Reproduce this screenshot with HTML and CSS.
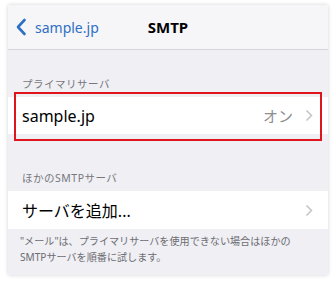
FILE: index.html
```html
<!DOCTYPE html>
<html>
<head>
  <title>SMTP</title>
  <link rel="stylesheet" href="styles.css">
</head>
<body>
  <div class="screen">
    <!-- ナビゲーション -->
    <div class="nav">
      <div class="back">
        <svg width="12" height="18" viewBox="0 0 12 18"><path d="M9.5 2 L3 9 L9.5 16" fill="none" stroke="#2f6fc4" stroke-width="2.6" stroke-linecap="round" stroke-linejoin="round"/></svg>
        <span>sample.jp</span>
      </div>
      <div class="title">SMTP</div>
    </div>

    <!-- プライマリサーバ -->
    <div class="section-head first">プライマリサーバ</div>
    <div class="row highlight">
      <span class="label">sample.jp</span>
      <span class="value">オン</span>
      <svg class="chev" width="8" height="13" viewBox="0 0 8 13"><path d="M1.5 1.5 L6.5 6.5 L1.5 11.5" fill="none" stroke="#c4c4c9" stroke-width="1.5"/></svg>
      <div class="mark"></div>
    </div>

    <!-- ほかのSMTPサーバ -->
    <div class="section-head">ほかのSMTPサーバ</div>
    <div class="row">
      <span class="label">サーバを追加...</span>
      <svg class="chev" width="8" height="13" viewBox="0 0 8 13"><path d="M1.5 1.5 L6.5 6.5 L1.5 11.5" fill="none" stroke="#c4c4c9" stroke-width="1.5"/></svg>
    </div>
    <p class="note">"メール"は、プライマリサーバを使用できない場合はほかの<br>SMTPサーバを順番に試します。</p>
  </div>
</body>
</html>
```

FILE: styles.css
```css
body {
  margin: 0;
  background: #ffffff;
  font-family: "Noto Sans", "Noto Sans CJK JP", sans-serif;
}

.screen {
  width: 320px;
  height: 270px;
  margin: 5px 8px;
  background: #efeff4;
  box-shadow: 0 0 4px rgba(0, 0, 0, 0.18);
  overflow: hidden;
}

.nav {
  position: relative;
  height: 44px;
  background: #f6f6f8;
  border-bottom: 1px solid #d6d6da;
  display: flex;
  align-items: center;
}

.back {
  display: flex;
  align-items: center;
  gap: 8px;
  padding-left: 7px;
  color: #2f6fc4;
  font-size: 14px;
}

.title {
  position: absolute;
  left: 0;
  right: 0;
  top: 0;
  line-height: 44px;
  text-align: center;
  font-size: 15px;
  font-weight: bold;
  color: #000;
  pointer-events: none;
}

.section-head {
  padding: 13px 14px 5px;
  font-size: 10.5px;
  line-height: 16px;
  color: #77777c;
  letter-spacing: 0.5px;
}

.section-head.first {
  padding-top: 26px;
}

.section-head:not(.first) {
  padding-top: 36px;
}

.row {
  position: relative;
  height: 38px;
  background: #fff;
  display: flex;
  align-items: center;
  padding: 0 14px;
}

.row.highlight {
  height: 37px;
}

.label {
  flex: 1;
  font-size: 16px;
  color: #000;
}

.value {
  font-size: 15px;
  color: #8e8e93;
  margin-right: 12px;
}

.chev {
  margin-right: 1px;
}

.mark {
  position: absolute;
  left: 6px;
  right: 6px;
  top: -5px;
  bottom: -7px;
  border: 2px solid #e0141c;
}

.note {
  margin: 0;
  padding: 4px 12px;
  font-size: 10.1px;
  line-height: 16px;
  color: #6d6d72;
  white-space: nowrap;
}
```
